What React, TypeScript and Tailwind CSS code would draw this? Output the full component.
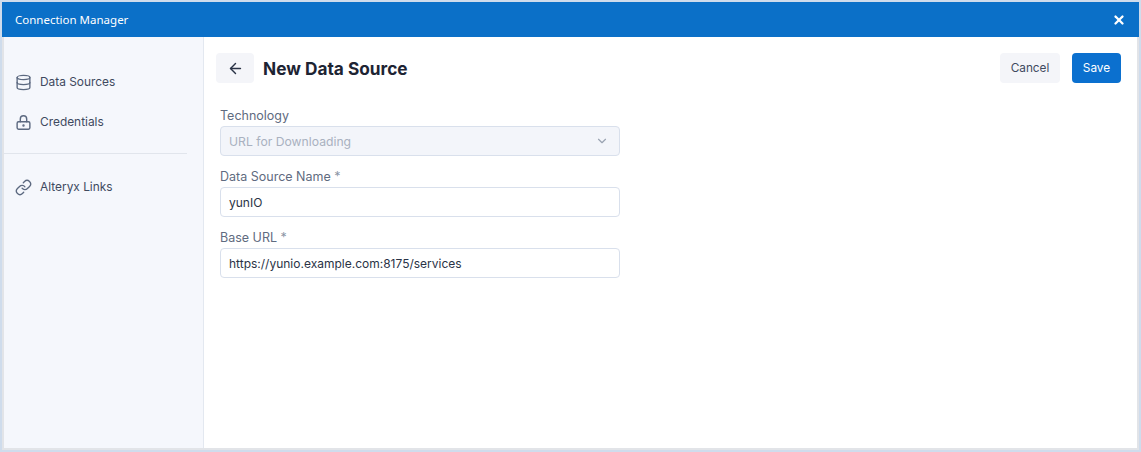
import { ArrowLeft, ChevronDown, Database, Link, X } from "lucide-react";

const LockIcon = () => (
  <svg width="17" height="17" viewBox="0 0 24 24" fill="none" stroke="currentColor" strokeWidth="2" strokeLinecap="round" strokeLinejoin="round" className="text-[#5c6980]">
    <rect x="3" y="11" width="18" height="10.5" rx="2" />
    <path d="M7.5 11V7a4.5 4.5 0 0 1 9 0v4" />
    <circle cx="12" cy="16.2" r="0.7" fill="currentColor" />
  </svg>
);

const App = () => {
  return (
    <div className="font-['Inter',sans-serif] w-[1141px] h-[452px] overflow-hidden border-2 border-[#cfdcec] flex flex-col bg-white">
      <div className="h-[35px] shrink-0 bg-[#0b70c8] flex items-center justify-between pl-[13px] pr-[13px] text-white">
        <span className="font-['Noto_Sans',sans-serif] text-[11.5px]">Connection Manager</span>
        <X size={14} strokeWidth={4} />
      </div>
      <div className="flex-1 min-h-0 flex border-x-2 border-b-2 border-[#e2e4e8]">
        {/* Sidebar */}
        <div className="w-[200px] shrink-0 bg-[#f5f7fc] border-r border-[#e3e8f0] pt-[25px] text-[11.9px] text-[#3f4a5f]">
          <div className="h-[40px] flex items-center gap-[8px] pl-[11px]">
            <Database size={17} strokeWidth={1.9} className="text-[#5c6980]" />
            <span>Data Sources</span>
          </div>
          <div className="h-[40px] flex items-center gap-[8px] pl-[11px]">
            <LockIcon />
            <span>Credentials</span>
          </div>
          <div className="h-px bg-[#e1e5ec] w-[183px] mt-[11px] mb-[13px]" />
          <div className="h-[40px] flex items-center gap-[8px] pl-[11px]">
            <Link size={17} strokeWidth={1.9} className="text-[#5c6980]" />
            <span>Alteryx Links</span>
          </div>
        </div>
        {/* Main */}
        <div className="flex-1 pt-[16px] pl-[12px] pr-[16px]">
          <div className="flex items-center justify-between">
            <div className="flex items-center gap-[9px]">
              <button className="w-[38px] h-[30px] rounded bg-[#f4f5f9] flex items-center justify-center text-[#2a3346]">
                <ArrowLeft size={17} strokeWidth={2} />
              </button>
              <h1 className="text-[17.25px] pt-[2px] font-bold text-[#1d2433]">New Data Source</h1>
            </div>
            <div className="flex items-center gap-[12px] text-[11.8px]">
              <button className="w-[60px] h-[30px] pt-px rounded bg-[#f4f5f9] text-[#3f4a5f]">Cancel</button>
              <button className="w-[49px] h-[30px] pt-px rounded bg-[#0b70cf] text-white">Save</button>
            </div>
          </div>
          <div className="w-[400px] ml-[4px] mt-[23px] text-[12px]">
            <div className="h-[20px] leading-[20px] text-[12.5px] text-[#5f6b80]">Technology</div>
            <div className="h-[30px] rounded border border-[#d9e0ec] bg-[#f3f5fa] flex items-center justify-between pl-[8px] pr-[10px] text-[#a9b1c0] text-[12.2px]">
              <span className="pt-[2px]">URL for Downloading</span>
              <ChevronDown size={14} className="text-[#9aa3b2]" />
            </div>
            <div className="h-[20px] leading-[20px] mt-[11px] text-[12.5px] text-[#5f6b80]">Data Source Name <span className="text-[#8b95a5]">*</span></div>
            <div className="h-[30px] pt-px rounded border border-[#d9e0ec] flex items-center pl-[8px] text-[#2a3346]">yunIO</div>
            <div className="h-[20px] leading-[20px] mt-[11px] text-[12.5px] text-[#5f6b80]">Base URL <span className="text-[#8b95a5]">*</span></div>
            <div className="h-[30px] pt-px rounded border border-[#d9e0ec] flex items-center pl-[8px] text-[#2a3346]">https://yunio.example.com:8175/services</div>
          </div>
        </div>
      </div>
    </div>
  );
};

export default App;
